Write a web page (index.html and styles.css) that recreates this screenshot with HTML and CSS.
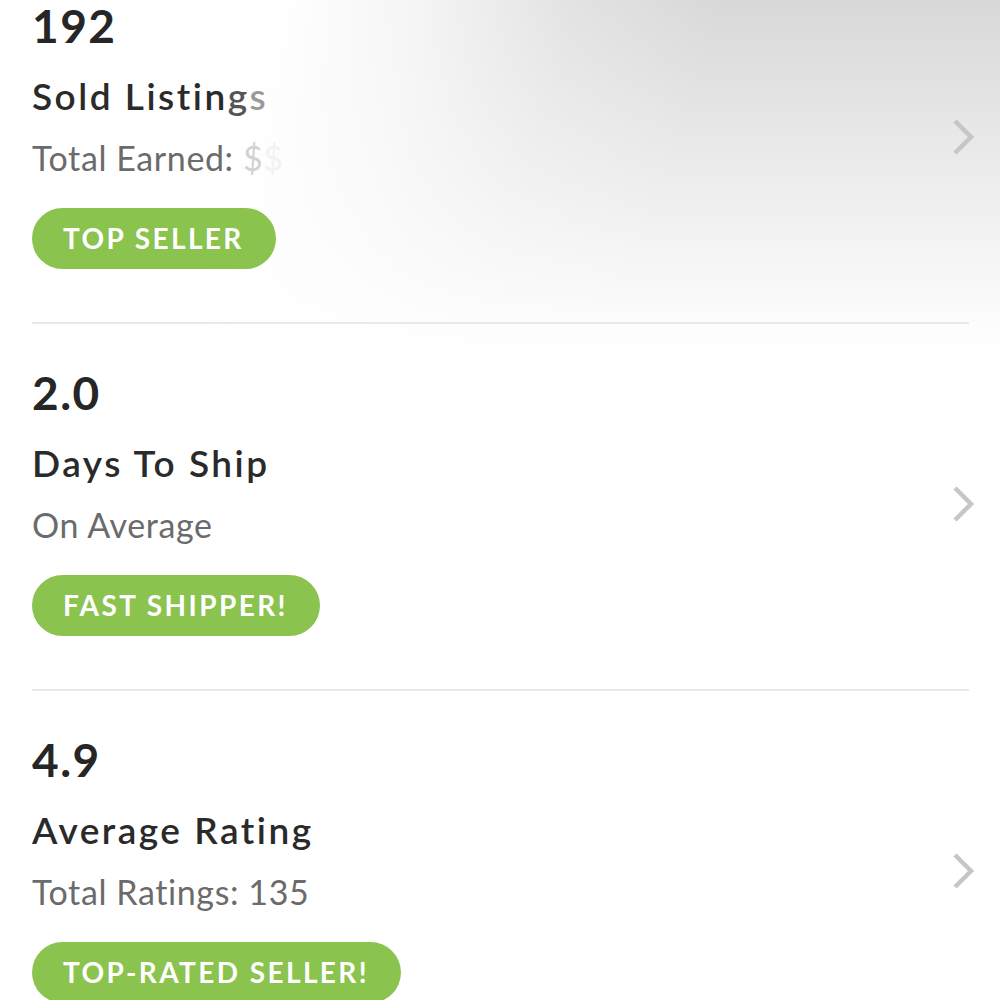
FILE: index.html
```html
<!DOCTYPE html>
<html lang="en">

<head>
    <meta charset="UTF-8">
    <meta name="viewport" content="width=device-width, initial-scale=1.0">
    <title>Seller Stats</title>
    <link rel="stylesheet" href="styles.css">
</head>

<body>
    <div class="list">
        <div class="row">
            <div class="stat">
                <div class="number">192</div>
                <div class="title">Sold Listin<span class="fade-1">g</span><span class="fade-2">s</span></div>
                <div class="subtitle">Total Earned: <span class="fade-3">$</span><span class="fade-4">$</span></div>
                <span class="badge">TOP SELLER</span>
            </div>
            <svg class="chevron" width="26" height="38" viewBox="0 0 26 38">
                <path d="M4 3 L20 19 L4 35" fill="none" stroke="#c6c6c6" stroke-width="4.5" />
            </svg>
        </div>
        <div class="row">
            <div class="stat">
                <div class="number">2.0</div>
                <div class="title">Days To Ship</div>
                <div class="subtitle">On Average</div>
                <span class="badge">FAST SHIPPER!</span>
            </div>
            <svg class="chevron" width="26" height="38" viewBox="0 0 26 38">
                <path d="M4 3 L20 19 L4 35" fill="none" stroke="#c6c6c6" stroke-width="4.5" />
            </svg>
        </div>
        <div class="row">
            <div class="stat">
                <div class="number">4.9</div>
                <div class="title">Average Rating</div>
                <div class="subtitle">Total Ratings: 135</div>
                <span class="badge">TOP-RATED SELLER!</span>
            </div>
            <svg class="chevron" width="26" height="38" viewBox="0 0 26 38">
                <path d="M4 3 L20 19 L4 35" fill="none" stroke="#c6c6c6" stroke-width="4.5" />
            </svg>
        </div>
    </div>
</body>

</html>
```

FILE: styles.css
```css
body {
    font-family: Lato, "Open Sans", sans-serif;
    margin: 0;
    background-color: white;
    background-image:
        linear-gradient(105deg, white 0, white 270px, rgba(255, 255, 255, 0.75) 400px, rgba(255, 255, 255, 0.25) 560px, rgba(255, 255, 255, 0) 700px),
        linear-gradient(to bottom, #d8d8d8 0, #e6e6e6 120px, #f2f2f2 230px, rgba(255, 255, 255, 0) 350px);
    background-size: 1000px 360px;
    background-repeat: no-repeat;
    overflow: hidden;
    height: 1000px;
}

.list {
    margin-top: -43px;
    padding-left: 32px;
    margin-right: 31px;
}

.row {
    display: flex;
    align-items: center;
    justify-content: space-between;
    padding: 41px 0 53px;
    border-bottom: 2px solid #e9e9e9;
}

.stat {
    display: flex;
    flex-direction: column;
    align-items: flex-start;
}

.number {
    font-size: 46px;
    line-height: 56px;
    font-weight: 700;
    letter-spacing: 1.5px;
    color: #262626;
}

.title {
    margin-top: 20px;
    font-size: 37px;
    line-height: 44px;
    font-weight: 600;
    letter-spacing: 2.5px;
    color: #2a2a2a;
}

.subtitle {
    margin-top: 20px;
    font-size: 34px;
    line-height: 40px;
    letter-spacing: 0.6px;
    color: #6b6b6b;
}

.fade-1 {
    color: #555;
}

.fade-2 {
    color: #9a9a9a;
}

.fade-3 {
    color: #d2d2d2;
}

.fade-4 {
    color: #f2f2f2;
}

.badge {
    margin-top: 30px;
    height: 61px;
    line-height: 61px;
    padding: 0 32px 0 31px;
    border-radius: 31px;
    background-color: #8bc34f;
    color: white;
    font-size: 28px;
    font-weight: 700;
    letter-spacing: 2.4px;
}

.chevron {
    margin-right: -8px;
    margin-top: 6px;
}
```
